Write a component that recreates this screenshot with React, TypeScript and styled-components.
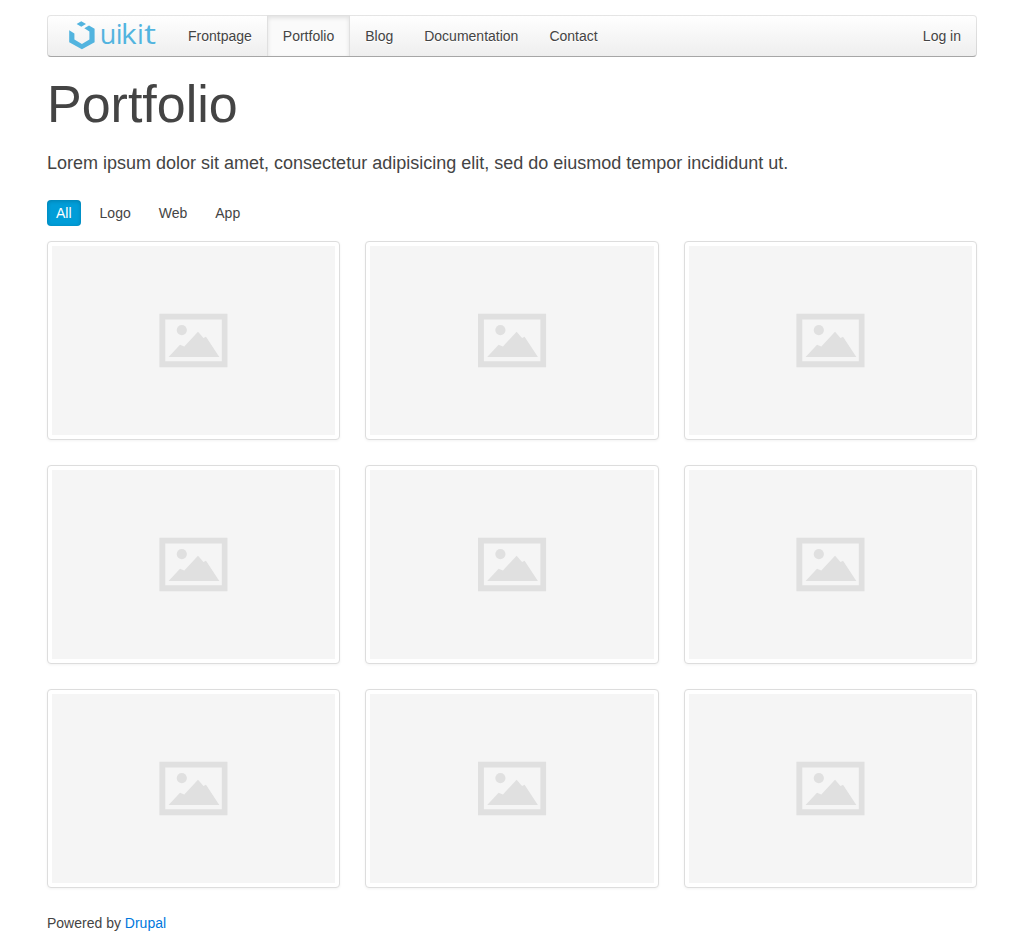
import React from "react";
import styled, { createGlobalStyle, css } from "styled-components";

const GlobalStyle = createGlobalStyle`
  *, *::before, *::after { box-sizing: border-box; }
  body {
    margin: 0;
    background: #fff;
    color: #444;
    font: normal 14px/20px "Liberation Sans", Arial, sans-serif;
  }
`;

const Page = styled.div`
  width: 980px;
  margin: 0 auto;
  padding: 15px 25px 0;
`;

const Navbar = styled.nav`
  display: flex;
  height: 42px;
  border: 1px solid rgba(0, 0, 0, 0.1);
  border-bottom-color: rgba(0, 0, 0, 0.3);
  border-radius: 4px;
  background: #f7f7f7 linear-gradient(to bottom, #fff, #eee) border-box;
`;

const Brand = styled.a`
  display: block;
  width: 125px;
  height: 40px;
`;

const NavItem = styled.a<{ $active?: boolean; $end?: boolean }>`
  height: 41px;
  margin: -1px 0 0 -1px;
  padding: 0 15px;
  border: 1px solid transparent;
  border-bottom-width: 0;
  line-height: 40px;
  color: #444;
  text-decoration: none;
  text-shadow: 0 1px 0 #fff;
  ${(p) =>
    p.$end &&
    css`
      margin-left: auto;
      margin-right: -1px;
    `}
  ${(p) =>
    p.$active &&
    css`
      background: #fafafa;
      border-color: rgba(0, 0, 0, 0.1);
      box-shadow: inset 0 2px 4px rgba(0, 0, 0, 0.1);
    `}
`;

const Title = styled.h1`
  margin: 15px 0;
  font-size: 52px;
  line-height: 64px;
  font-weight: normal;
`;

const Lead = styled.p`
  margin: 0 0 25px;
  font-size: 18px;
  line-height: 24px;
`;

const Filters = styled.div`
  display: flex;
  gap: 10px;
  margin-bottom: 15px;
`;

const Filter = styled.a<{ $active?: boolean }>`
  padding: 3px 9px;
  border-radius: 4px;
  color: #444;
  text-decoration: none;
  ${(p) =>
    p.$active &&
    css`
      background: #009dd8;
      color: #fff;
      box-shadow: inset 0 1px 4px rgba(0, 0, 0, 0.2);
    `}
`;

const Grid = styled.div`
  display: grid;
  grid-template-columns: repeat(3, 1fr);
  gap: 25px;
`;

const Thumbnail = styled.a`
  display: block;
  padding: 4px;
  border: 1px solid #ddd;
  border-radius: 4px;
  background: #fff;
  box-shadow: 0 1px 3px rgba(0, 0, 0, 0.05);
`;

const Placeholder = styled.svg`
  display: block;
  width: 100%;
  aspect-ratio: 3 / 2;
  background: #f5f5f5;
`;

const Footer = styled.footer`
  margin-top: 25px;
`;

const Link = styled.a`
  color: #07d;
  text-decoration: none;
`;

const Wordmark = styled.text`
  font-family: "Open Sans", "Noto Sans", sans-serif;
  font-size: 27px;
  font-weight: 400;
`;

const Logo = () => (
  <svg width="125" height="40" viewBox="48 16 125 40">
    <g fill="#52b4df">
      <path d="M81.3 21.2L86 23.9L81.3 26.8L76.6 23.9Z" />
      <path d="M89 25.4L94.6 28.8V42.2L81.9 49.3L69.2 42.2V30.3L74.4 33.5V39.6L81.9 43.9L89.4 39.6V31.6L84.3 28.2Z" />
      <Wordmark x="99.8 115.7" y="43.5">
        ui
      </Wordmark>
      <Wordmark x="121" y="43.5" textLength="15.6" lengthAdjust="spacingAndGlyphs">
        k
      </Wordmark>
      <Wordmark x="137.1" y="43.5">
        i
      </Wordmark>
      <Wordmark x="144" y="43.5" textLength="12" lengthAdjust="spacingAndGlyphs">
        t
      </Wordmark>
    </g>
  </svg>
);

const PlaceholderImage = ({ shift }: { shift: number }) => (
  <Placeholder viewBox="0 0 283.33 188.89">
    <g fill="#e0e0e0" transform={`translate(${shift} 0)`}>
      <path
        fillRule="evenodd"
        d="M107.4 67.8H175.5V121.2H107.4ZM113.3 73.6V115.3H169.8V73.6Z"
      />
      <circle cx="129.8" cy="84.1" r="5.1" />
      <path d="M116.6 111L128 98.7L132.3 100.4L146 85.7L151.5 92L154 90.7L167.3 111Z" />
    </g>
  </Placeholder>
);

const navItems = ["Frontpage", "Portfolio", "Blog", "Documentation", "Contact"];
const filters = ["All", "Logo", "Web", "App"];

export default function App() {
  return (
    <>
      <GlobalStyle />
      <Page>
        <Navbar>
          <Brand>
            <Logo />
          </Brand>
          {navItems.map((item) => (
            <NavItem key={item} $active={item === "Portfolio"}>
              {item}
            </NavItem>
          ))}
          <NavItem $end>Log in</NavItem>
        </Navbar>
        <Title>Portfolio</Title>
        <Lead>
          Lorem ipsum dolor sit amet, consectetur adipisicing elit, sed do eiusmod tempor
          incididunt ut.
        </Lead>
        <Filters>
          {filters.map((item) => (
            <Filter key={item} $active={item === "All"}>
              {item}
            </Filter>
          ))}
        </Filters>
        <Grid>
          {Array.from({ length: 9 }, (_, i) => (
            <Thumbnail key={i}>
              <PlaceholderImage shift={i % 3 === 1 ? 0.6 : 0} />
            </Thumbnail>
          ))}
        </Grid>
        <Footer>
          Powered by <Link>Drupal</Link>
        </Footer>
      </Page>
    </>
  );
}
